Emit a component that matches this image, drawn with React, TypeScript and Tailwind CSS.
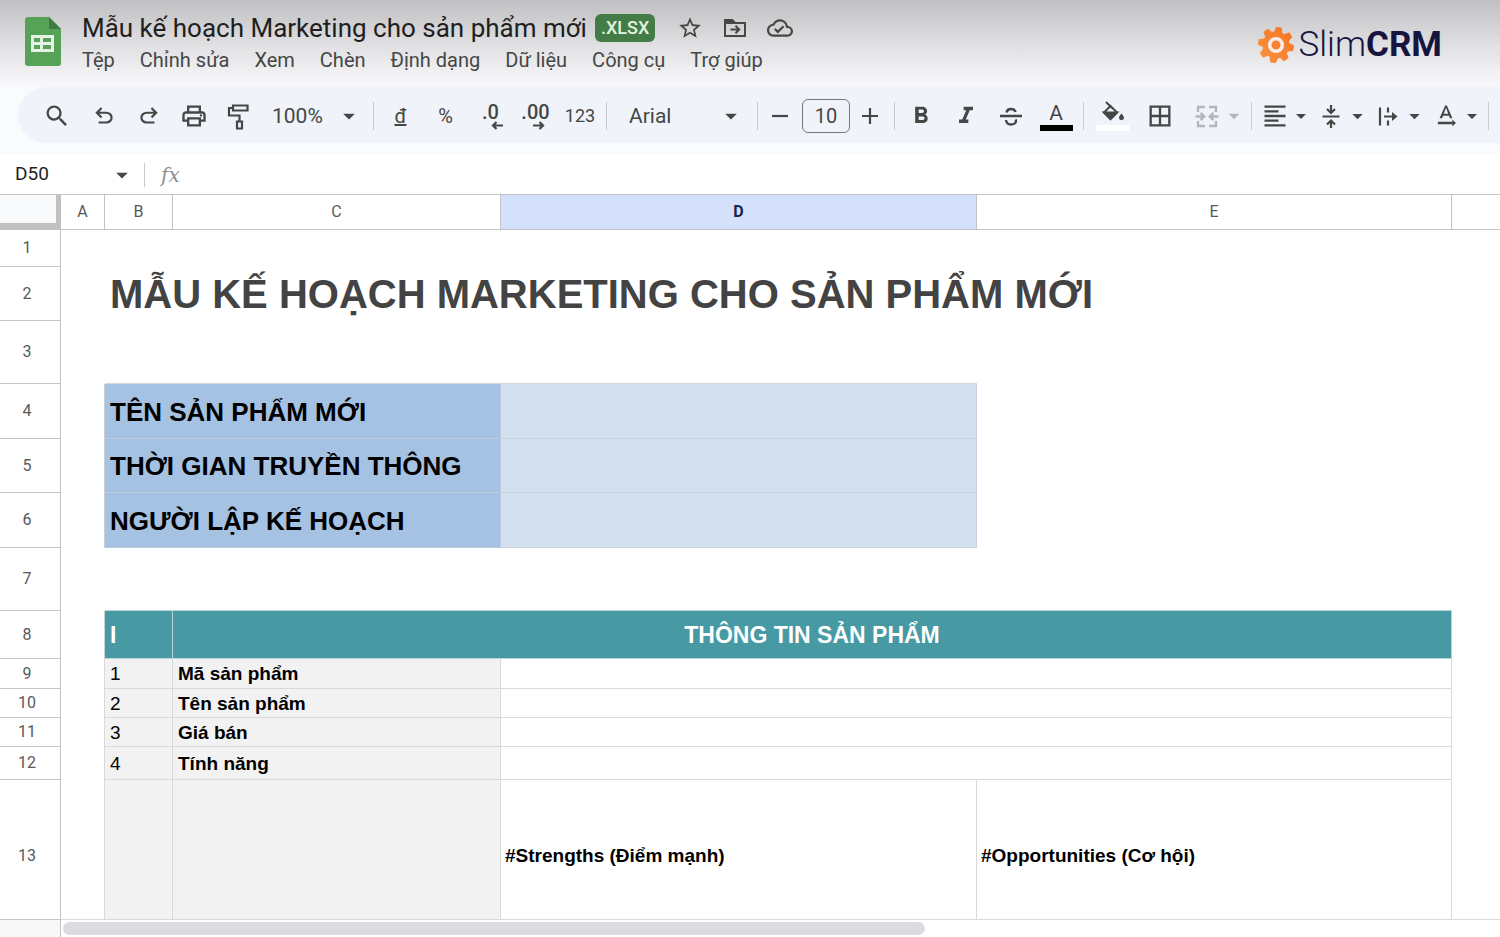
import React from "react";
import {
  MdArrowDropDown,
  MdBorderAll,
  MdFormatAlignLeft,
  MdFormatBold,
  MdFormatItalic,
  MdOutlineCloudDone,
  MdOutlinePrint,
  MdSearch,
  MdStarBorder,
  MdTextRotationNone,
} from "react-icons/md";

const menus = ["Tệp", "Chỉnh sửa", "Xem", "Chèn", "Định dạng", "Dữ liệu", "Công cụ", "Trợ giúp"];

const infoRows = [
  { row: 4, label: "TÊN SẢN PHẨM MỚI", height: "h-[55px]" },
  { row: 5, label: "THỜI GIAN TRUYỀN THÔNG", height: "h-[54px]" },
  { row: 6, label: "NGƯỜI LẬP KẾ HOẠCH", height: "h-[55px]" },
];

const productRows = [
  { row: 9, no: 1, label: "Mã sản phẩm", height: "h-[30px]" },
  { row: 10, no: 2, label: "Tên sản phẩm", height: "h-[29px]" },
  { row: 11, no: 3, label: "Giá bán", height: "h-[29px]" },
  { row: 12, no: 4, label: "Tính năng", height: "h-[33px]" },
];

const SheetsLogo = () => (
  <svg width="36" height="49" viewBox="0 0 36 49" aria-hidden="true">
    <path d="M3 0h21l12 12v34a3 3 0 0 1-3 3H3a3 3 0 0 1-3-3V3a3 3 0 0 1 3-3z" fill="#56a357" />
    <path d="M24 0l12 12H24z" fill="#3f7c42" />
    <path
      d="M6 18h23v17H6zM9 21v4h6v-4zm9 0v4h8v-4zM9 28v4h6v-4zm9 0v4h8v-4z"
      fill="#e6f2e4"
      fillRule="evenodd"
    />
  </svg>
);

const Gear = () => (
  <svg width="36" height="36" viewBox="-18 -18 36 36" aria-hidden="true">
    <defs>
      <linearGradient id="gear" x1="0" y1="1" x2="1" y2="0">
        <stop offset="0" stopColor="#fb9440" />
        <stop offset="1" stopColor="#f5731f" />
      </linearGradient>
    </defs>
    <mask id="teeth">
      <circle r="13.5" fill="#fff" />
      {[10, 55, 100, 145, 190, 235, 280, 325].map((deg) => (
        <path key={deg} d="M-4.4-12L-3-17.3Q-2.8-18-2-18H2Q2.8-18 3-17.3L4.4-12z" fill="#fff" transform={`rotate(${deg})`} />
      ))}
    </mask>
    <rect x="-18" y="-18" width="36" height="36" fill="url(#gear)" mask="url(#teeth)" />
    <circle r="6.3" fill="none" stroke="#f7ecea" strokeWidth="3.6" />
  </svg>
);

const FolderMoveIcon = () => (
  <svg width="26" height="26" viewBox="0 0 26 26" fill="none" stroke="currentColor" strokeWidth="2">
    <path d="M3 5h7l3 3h10v13H3z" />
    <path d="M3 5h7l3 3H3z" fill="currentColor" />
    <path d="M8.500 14.500h8M13.500 10.800l3.700 3.700-3.700 3.700" />
  </svg>
);

const UndoIcon = ({ flip = false }: { flip?: boolean }) => (
  <svg width="26" height="26" viewBox="0 0 24 24" fill="currentColor" className={flip ? "-scale-x-100" : ""}>
    <path d="M7 19v-2h7.1q1.575 0 2.738-1T18 13.5 16.838 11 14.1 10H7.8l2.6 2.6L9 14 4 9l5-5 1.4 1.4L7.8 8h6.3q2.425 0 4.163 1.575T20 13.5t-1.737 3.925T14.1 19z" />
  </svg>
);

const PaintIcon = () => (
  <svg width="28" height="28" viewBox="0 0 28 28" fill="none" stroke="currentColor" strokeWidth="2.2">
    <path d="M8 3.500h14.500v5H8zM8 6H4v7.500h10.500v6M12 19.500h5v7h-5z" />
  </svg>
);

const StrikeIcon = () => (
  <svg width="28" height="28" viewBox="0 0 28 28" fill="none" stroke="currentColor" strokeWidth="2.4">
    <path d="M3 14h22M9.500 10.500C10 8 11.800 7 14 7s4 1 4.500 3M9 18c.3 3 2.300 4.500 5 4.500s5-1.300 5-3.500c0-.6-.1-1-.4-1.500" />
  </svg>
);

const FillIcon = () => (
  <svg width="24" height="22" viewBox="0 0 24 22" fill="none" stroke="currentColor" strokeWidth="2">
    <path d="M5 1l6 6M9.500 5L16 11.500l-6.500 6.500L3 11.500z" />
    <path d="M3 11.500h13L9.500 18z" fill="currentColor" />
    <path d="M20.500 12.500s-2.500 2.700-2.500 4.200a2.500 2.500 0 0 0 5 0c0-1.500-2.500-4.200-2.500-4.200z" fill="currentColor" stroke="none" />
  </svg>
);

const MergeIcon = () => (
  <svg width="26" height="26" viewBox="0 0 26 26" fill="none" stroke="currentColor" strokeWidth="2.4">
    <path d="M11 4H4v5M11 23H4v-5M15 4h7v5M15 23h7v-5M1.500 13.500h8M24.500 13.500h-8M6.500 9.800l3.700 3.700-3.700 3.700M19.500 9.800l-3.700 3.700 3.700 3.700" />
  </svg>
);

const VerticalCenterIcon = () => (
  <svg width="24" height="26" viewBox="0 0 24 26" fill="none" stroke="currentColor" strokeWidth="2.2">
    <path d="M3.500 13.500h17M12 2v7M8 6l4 4 4-4M12 25v-7M8 21.500l4-4 4 4" />
  </svg>
);

const OverflowIcon = () => (
  <svg width="26" height="26" viewBox="0 0 26 26" fill="none" stroke="currentColor" strokeWidth="2.2">
    <path d="M5 4.500v18M13 4.500v5M13 17.500v5M9 13.500h10" />
    <path d="M17 9l5.500 4.500L17 18z" fill="currentColor" stroke="none" />
  </svg>
);

const SmallArrow = ({ flip = false }: { flip?: boolean }) => (
  <svg width="12" height="9" viewBox="0 0 12 9" fill="none" stroke="currentColor" strokeWidth="2.2" className={flip ? "-scale-x-100" : ""}>
    <path d="M0 4.500h10M6.500 1L10 4.500 6.500 8" />
  </svg>
);

const Tool = ({
  label,
  className = "w-[45px]",
  children,
}: {
  label: string;
  className?: string;
  children: React.ReactNode;
}) => (
  <button type="button" aria-label={label} className={`flex h-11 shrink-0 items-center justify-center ${className}`}>
    {children}
  </button>
);

const DropTool = ({
  label,
  className = "w-[57px] pl-[5px]",
  children,
}: {
  label: string;
  className?: string;
  children: React.ReactNode;
}) => (
  <button type="button" aria-label={label} className={`flex h-11 shrink-0 items-center ${className}`}>
    <span className="flex w-7 justify-center">{children}</span>
    <MdArrowDropDown size={26} />
  </button>
);

const Separator = () => <div className="mx-1 h-7 w-px shrink-0 bg-[#c7c9cc]" />;

const Header = () => (
  <header className="flex h-[87px] items-start bg-linear-to-b from-[#c0bfc1] via-[#e2e1e4] via-55% to-[#f9f9fb] pl-[25px] pr-[58px] pt-3">
    <div className="mt-[5px] shrink-0">
      <SheetsLogo />
    </div>
    <div className="ml-[21px] min-w-0">
      <div className="flex h-8 items-center whitespace-nowrap">
        <h1 className="text-[26px] leading-8 text-[#1f1f1f]">Mẫu kế hoạch Marketing cho sản phẩm mới</h1>
        <span className="ml-2 rounded-md bg-[#437c46] px-[6px] text-lg font-medium leading-7 text-[#e3f3df]">.XLSX</span>
        <div className="ml-[22px] flex gap-[19px] text-[#444746]">
          <button type="button" aria-label="Gắn dấu sao">
            <MdStarBorder size={26} />
          </button>
          <button type="button" aria-label="Di chuyển">
            <FolderMoveIcon />
          </button>
          <button type="button" aria-label="Trạng thái tài liệu">
            <MdOutlineCloudDone size={26} />
          </button>
        </div>
      </div>
      <nav className="mt-1 flex gap-[25px] whitespace-nowrap text-xl leading-6 text-[#444746]">
        {menus.map((menu) => (
          <button key={menu} type="button">
            {menu}
          </button>
        ))}
      </nav>
    </div>
    <div className="ml-auto mt-[13px] flex shrink-0 items-center gap-[5px] text-[#15153f]">
      <Gear />
      <span className="text-[35px] leading-10">
        <span className="font-light">Slim</span>
        <span className="font-bold">CRM</span>
      </span>
    </div>
  </header>
);

const Toolbar = () => (
  <div className="overflow-hidden bg-[#f9fbfd] pb-[11px] pl-[18px]">
    <div className="flex h-14 items-center rounded-l-full bg-[#f0f3f9] pl-4 pt-px text-[#444746]">
      <Tool label="Tìm kiếm">
        <MdSearch size={28} />
      </Tool>
      <Tool label="Hủy" className="ml-[2px] w-[45px]">
        <UndoIcon />
      </Tool>
      <Tool label="Làm lại">
        <UndoIcon flip />
      </Tool>
      <Tool label="In">
        <MdOutlinePrint size={28} />
      </Tool>
      <Tool label="Sao chép định dạng">
        <PaintIcon />
      </Tool>
      <div className="relative w-[108px] shrink-0">
        <select aria-label="Thu phóng" className="w-full appearance-none bg-transparent pl-[11px] text-[21px] leading-7">
          <option>100%</option>
        </select>
        <MdArrowDropDown size={28} className="pointer-events-none absolute right-[6px] top-0" />
      </div>
      <Separator />
      <Tool label="Định dạng tiền tệ">
        <span className="text-xl underline">đ</span>
      </Tool>
      <Tool label="Định dạng phần trăm">
        <span className="text-xl">%</span>
      </Tool>
      <Tool label="Giảm số chữ số thập phân">
        <span className="flex flex-col text-xl font-medium leading-5">
          .0
          <span className="-mt-px pl-3">
            <SmallArrow flip />
          </span>
        </span>
      </Tool>
      <Tool label="Tăng số chữ số thập phân">
        <span className="flex flex-col text-xl font-medium leading-5">
          .00
          <span className="-mt-px pl-3">
            <SmallArrow />
          </span>
        </span>
      </Tool>
      <Tool label="Định dạng khác" className="w-11">
        <span className="text-lg">123</span>
      </Tool>
      <Separator />
      <div className="relative w-[142px] shrink-0">
        <select aria-label="Phông chữ" className="w-full appearance-none bg-transparent pl-[18px] text-[21px] leading-7">
          <option>Arial</option>
        </select>
        <MdArrowDropDown size={28} className="pointer-events-none absolute right-2 top-0" />
      </div>
      <Separator />
      <Tool label="Giảm cỡ chữ" className="w-9">
        <svg width="16" height="16" viewBox="0 0 16 16" stroke="currentColor" strokeWidth="2.2">
          <path d="M0 8h16" />
        </svg>
      </Tool>
      <input
        aria-label="Cỡ chữ"
        defaultValue="10"
        className="ml-1 h-[34px] w-12 shrink-0 rounded-md border border-[#747775] text-center text-xl"
      />
      <Tool label="Tăng cỡ chữ" className="w-10">
        <svg width="16" height="16" viewBox="0 0 16 16" stroke="currentColor" strokeWidth="2.2">
          <path d="M0 8h16M8 0v16" />
        </svg>
      </Tool>
      <Separator />
      <Tool label="Đậm" className="w-11">
        <MdFormatBold size={28} />
      </Tool>
      <Tool label="Nghiêng">
        <MdFormatItalic size={28} />
      </Tool>
      <Tool label="Gạch ngang">
        <StrikeIcon />
      </Tool>
      <Tool label="Màu văn bản" className="w-[46px]">
        <span className="flex flex-col items-center text-[21px] leading-6">
          A
          <span className="h-[6px] w-[33px] bg-black" />
        </span>
      </Tool>
      <Separator />
      <Tool label="Màu nền" className="w-[49px]">
        <span className="flex flex-col items-center">
          <FillIcon />
          <span className="mt-[2px] h-[6px] w-[33px] bg-white" />
        </span>
      </Tool>
      <Tool label="Đường viền">
        <MdBorderAll size={28} />
      </Tool>
      <DropTool label="Hợp nhất ô" className="w-[65px] pl-[11px] text-[#b4b7ba]">
        <MergeIcon />
      </DropTool>
      <Separator />
      <DropTool label="Căn ngang">
        <MdFormatAlignLeft size={28} />
      </DropTool>
      <DropTool label="Căn dọc">
        <VerticalCenterIcon />
      </DropTool>
      <DropTool label="Xuống dòng">
        <OverflowIcon />
      </DropTool>
      <DropTool label="Xoay văn bản">
        <MdTextRotationNone size={28} />
      </DropTool>
      <Separator />
    </div>
  </div>
);

const FormulaBar = () => (
  <div className="flex h-10 items-center bg-white pt-px text-[#1f1f1f]">
    <input aria-label="Hộp tên" defaultValue="D50" className="w-[108px] pl-[15px] text-[19px] outline-none" />
    <button type="button" aria-label="Danh sách dải ô" className="text-[#444746]">
      <MdArrowDropDown size={28} />
    </button>
    <div className="ml-2 h-6 w-px bg-[#c7c9cc]" />
    <label htmlFor="formula" className="ml-4 font-['DejaVu_Serif','Liberation_Serif',serif] text-xl italic text-[#8d8f91]">
      fx
    </label>
    <input id="formula" className="ml-4 min-w-0 flex-1 outline-none" />
  </div>
);

const ColHead = ({ name, active = false }: { name: string; active?: boolean }) => (
  <th
    scope="col"
    className={`border-b border-r border-[#c4c4c4] text-base ${
      active ? "bg-[#d5e1fb] font-bold text-[#14264d]" : "bg-white font-normal text-[#575a5a]"
    }`}
  >
    {name}
  </th>
);

const RowHead = ({ row, className = "" }: { row: number; className?: string }) => (
  <th
    scope="row"
    className={`border-b border-r border-[#c4c4c4] bg-white pr-[6px] text-base font-normal text-[#575a5a] ${className}`}
  >
    {row}
  </th>
);

const Sheet = () => (
  <table className="w-full table-fixed border-separate border-spacing-0 border-t border-[#c4c4c4] font-['Liberation_Sans',Arial,sans-serif] text-[19px] leading-6 text-black">
    <colgroup>
      <col className="w-[61px]" />
      <col className="w-11" />
      <col className="w-[68px]" />
      <col className="w-[328px]" />
      <col className="w-[476px]" />
      <col className="w-[475px]" />
      <col />
    </colgroup>
    <thead className="font-[Roboto,sans-serif]">
      <tr className="h-[35px]">
        <td className="border-b border-r-[5px] border-[#c0c0c0] bg-[#f8f9fb] shadow-[inset_0_-6px_0_#c0c0c0]" />
        <ColHead name="A" />
        <ColHead name="B" />
        <ColHead name="C" />
        <ColHead name="D" active />
        <ColHead name="E" />
        <td className="border-b border-[#c4c4c4]" />
      </tr>
    </thead>
    <tbody className="[&_th]:font-[Roboto,sans-serif]">
      <tr className="h-[37px]">
        <RowHead row={1} />
        <td colSpan={6} />
      </tr>
      <tr className="h-[54px]">
        <RowHead row={2} />
        <td />
        <td colSpan={5} className="whitespace-nowrap pl-[5px] text-[40px] font-bold leading-10 text-[#434343]">
          MẪU KẾ HOẠCH MARKETING CHO SẢN PHẨM MỚI
        </td>
      </tr>
      <tr className="h-[63px]">
        <RowHead row={3} />
        <td />
        <td colSpan={3} className="border-b border-[#d5d9de]" />
        <td colSpan={2} />
      </tr>
      {infoRows.map((item) => (
        <tr key={item.row} className={item.height}>
          <RowHead row={item.row} />
          <td className="border-r border-[#c5cfdb]" />
          <td
            colSpan={2}
            className="whitespace-nowrap border-b border-r border-[#bccbdd] bg-[#a6c2e3] pl-[5px] pt-px text-[26px] font-bold leading-8"
          >
            {item.label}
          </td>
          <td className="border-b border-r border-[#c9d3df] bg-[#d2e0f0]" />
          <td colSpan={2} />
        </tr>
      ))}
      <tr className="h-[63px]">
        <RowHead row={7} />
        <td />
        <td colSpan={4} className="border-b border-[#b9d5d8]" />
        <td />
      </tr>
      <tr className="h-12">
        <RowHead row={8} />
        <td className="border-r border-[#c8d4d6]" />
        <td className="border-b border-r border-[#b9d5d8] bg-[#479aa4] pl-[5px] text-[23px] font-bold text-white">I</td>
        <td colSpan={3} className="border-b border-r border-[#b9d5d8] bg-[#479aa4] text-center text-[23px] font-bold text-white">
          THÔNG TIN SẢN PHẨM
        </td>
        <td />
      </tr>
      {productRows.map((item) => (
        <tr key={item.row} className={item.height}>
          <RowHead row={item.row} />
          <td className="border-r border-[#d9d9d9]" />
          <td className="border-b border-r border-[#d9d9d9] bg-[#f2f2f2] pl-[5px] pt-px">{item.no}</td>
          <td className="border-b border-r border-[#d9d9d9] bg-[#f2f2f2] pl-[5px] pt-px font-bold">{item.label}</td>
          <td colSpan={2} className="border-b border-r border-[#d9d9d9]" />
          <td />
        </tr>
      ))}
      <tr className="h-[140px]">
        <RowHead row={13} className="pt-3" />
        <td className="border-b border-r border-[#d9d9d9]" />
        <td className="border-b border-r border-[#d9d9d9] bg-[#f2f2f2]" />
        <td className="border-b border-r border-[#d9d9d9] bg-[#f2f2f2]" />
        <td className="border-b border-r border-[#d9d9d9] pl-1 pt-3 font-bold">#Strengths (Điểm mạnh)</td>
        <td className="border-b border-r border-[#d9d9d9] pl-1 pt-3 font-bold">#Opportunities (Cơ hội)</td>
        <td className="border-b border-[#d9d9d9]" />
      </tr>
    </tbody>
  </table>
);

const ScrollBar = () => (
  <div className="flex h-[17px] bg-white">
    <div className="w-[61px] shrink-0 border-r border-[#c4c4c4] bg-[#f8f8f9]" />
    <div className="flex-1 pl-[2px] pt-[2px]">
      <div className="h-[13px] w-3/5 rounded-full bg-[#dadce0]" />
    </div>
  </div>
);

export default function App() {
  return (
    <div className="overflow-hidden bg-white font-[Roboto,'Noto_Sans',sans-serif]">
      <Header />
      <Toolbar />
      <FormulaBar />
      <Sheet />
      <ScrollBar />
    </div>
  );
}
